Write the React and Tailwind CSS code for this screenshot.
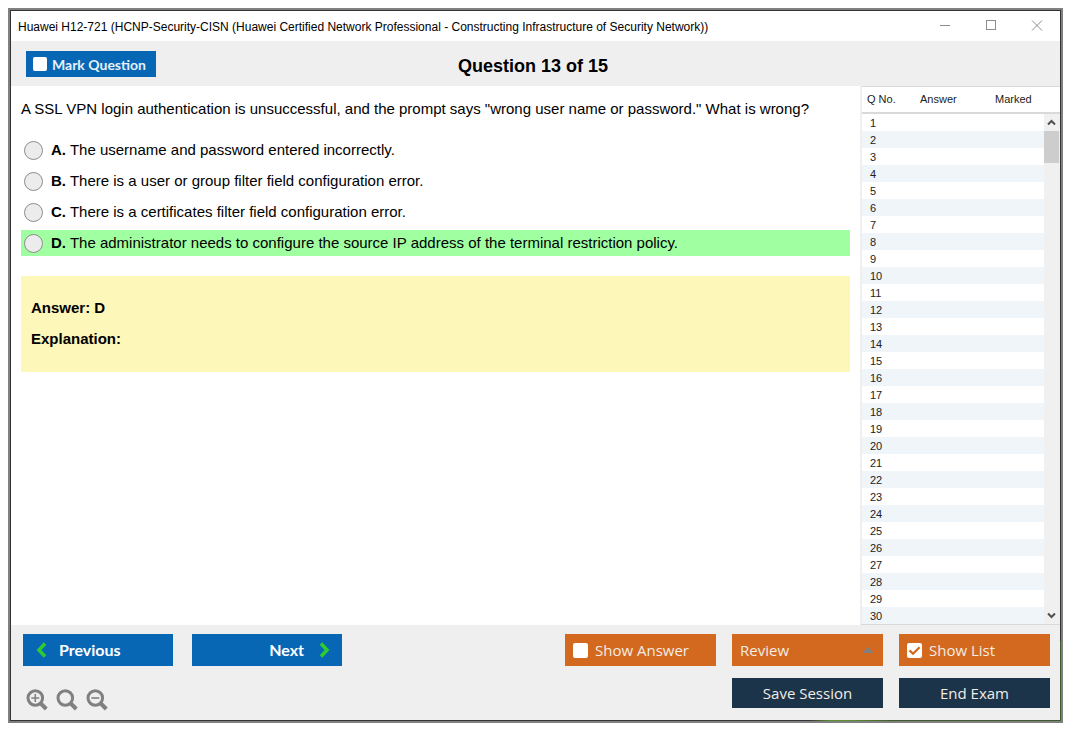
import { useState } from "react";

const OPTIONS = [
  { key: "A", text: "The username and password entered incorrectly." },
  { key: "B", text: "There is a user or group filter field configuration error." },
  { key: "C", text: "There is a certificates filter field configuration error." },
  {
    key: "D",
    text: "The administrator needs to configure the source IP address of the terminal restriction policy.",
    correct: true,
  },
];

const ROWS = Array.from({ length: 30 }, (_, i) => i + 1);

function TitleBar() {
  const control = "flex h-[30px] w-[46px] items-center justify-center text-[#8c8c8c]";
  return (
    <div className="flex items-center justify-between bg-white pl-[7px]">
      <span className="pt-[2px] text-[12px] leading-[28px] text-black">
        Huawei H12-721 (HCNP-Security-CISN (Huawei Certified Network Professional - Constructing
        Infrastructure of Security Network))
      </span>
      <div className="flex shrink-0">
        <button type="button" aria-label="Minimize" className={control}>
          <svg width="12" height="12" viewBox="0 0 12 12" stroke="currentColor">
            <path d="M1 5.5h10" />
          </svg>
        </button>
        <button type="button" aria-label="Maximize" className={control}>
          <svg width="12" height="12" viewBox="0 0 12 12" fill="none" stroke="currentColor">
            <rect x="1.5" y="0.5" width="9" height="9" />
          </svg>
        </button>
        <button type="button" aria-label="Close" className={control}>
          <svg width="12" height="12" viewBox="0 0 12 12" stroke="currentColor">
            <path d="M1 0.5l10 10M11 0.5L1 10.5" />
          </svg>
        </button>
      </div>
    </div>
  );
}

function CheckButton({ id, label, checked, onChange, className, boxClass }) {
  return (
    <label htmlFor={id} className={"flex cursor-pointer items-center " + className}>
      <span className={"grid shrink-0 " + boxClass}>
        <input
          id={id}
          type="checkbox"
          checked={checked}
          onChange={(e) => onChange(e.target.checked)}
          className="col-start-1 row-start-1 h-full w-full appearance-none rounded-[2px] bg-white"
        />
        {checked && (
          <svg
            viewBox="0 0 15 15"
            className="pointer-events-none col-start-1 row-start-1 h-full w-full"
            fill="none"
            stroke="#d2691e"
            strokeWidth="2.2"
          >
            <path d="M2.6 7.4l3.4 3.4 6.6-6.6" />
          </svg>
        )}
      </span>
      {label}
    </label>
  );
}

function QuestionList() {
  const head = "h-[28px] border-t border-b-2 border-[#d9d9d9] py-0 font-normal";
  return (
    <aside className="flex w-[200px] shrink-0 border-b border-l-2 border-b-[#d9d9d9] border-l-[#efefef] bg-white text-[11px] text-[#222]">
      <table className="flex-1 border-separate border-spacing-0 text-left">
        <thead>
          <tr>
            <th scope="col" className={"w-[53px] pl-[5px] " + head}>Q No.</th>
            <th scope="col" className={"w-[75px] pl-[5px] " + head}>Answer</th>
            <th scope="col" className={"pl-[5px] " + head}>Marked</th>
          </tr>
        </thead>
        <tbody>
          {ROWS.map((n) => (
            <tr key={n} className="h-[17px] even:bg-[#eff5f9]">
              <td className="pt-[2px] pr-0 pb-0 pl-2 leading-[15px]">{n}</td>
              <td className="p-0" />
              <td className="p-0" />
            </tr>
          ))}
        </tbody>
      </table>
      <div className="flex w-4 flex-col">
        <div className="h-[28px] border-t border-b-2 border-[#d9d9d9]" />
        <div className="flex flex-1 flex-col bg-[#f0f0f0]">
          <button type="button" aria-label="Scroll up" className="flex h-[17px] items-center justify-center pr-px">
            <svg width="9" height="7" viewBox="0 0 9 7" fill="none" stroke="#505050" strokeWidth="2">
              <path d="M1 5.5l3.5-3.5L8 5.5" />
            </svg>
          </button>
          <div className="mr-px h-[32px] bg-[#cdcdcd]" />
          <button type="button" aria-label="Scroll down" className="mt-auto flex h-[17px] items-center justify-center pr-px">
            <svg width="9" height="7" viewBox="0 0 9 7" fill="none" stroke="#505050" strokeWidth="2">
              <path d="M1 1.5L4.500 5 8 1.500" />
            </svg>
          </button>
        </div>
      </div>
    </aside>
  );
}

function ZoomIcon({ children }) {
  return (
    <svg width="22" height="22" viewBox="0 0 22 22" fill="none" stroke="#808080">
      <circle cx="9.300" cy="9" r="7.300" strokeWidth="3" />
      <path d="M14.300 14l6 6" strokeWidth="4" />
      {children}
    </svg>
  );
}

export default function App() {
  const [marked, setMarked] = useState(false);
  const [showAnswer, setShowAnswer] = useState(false);
  const [showList, setShowList] = useState(true);
  const [choice, setChoice] = useState(null);

  return (
    <div className="flex min-h-screen flex-col bg-white pt-2 pr-3 pb-3 pl-2 font-['Liberation_Sans',Arial,sans-serif] text-black">
      <div className="flex flex-1 flex-col border-2 border-[#808080]">
        <div className="flex flex-1 flex-col bg-[#333] bg-[linear-gradient(to_right,#333_76%,#5a8f2e_78%,#5a8f2e_80%,#3f5a2a_84%)] bg-[length:100%_80px] bg-bottom bg-no-repeat p-px">
          <TitleBar />

          <header className="grid grid-cols-[1fr_auto_1fr] items-start bg-[#efefef] pt-[10px] pr-5 pb-[5px] pl-[15px]">
            <CheckButton
              id="mark"
              label="Mark Question"
              checked={marked}
              onChange={setMarked}
              className="h-[26px] w-[130px] gap-[5px] bg-[#0867b5] pl-[7px] font-['Lato','Open_Sans',sans-serif] text-[14px] font-bold text-[#e6f0f8]"
              boxClass="h-[14px] w-[14px]"
            />
            <h1 className="text-[18px] leading-[30px] font-bold">Question 13 of 15</h1>
          </header>

          <div className="flex flex-1 bg-white">
            <main className="flex-1 px-[10px] pt-[10px] text-[15px] leading-[26px]">
              <p>
                A SSL VPN login authentication is unsuccessful, and the prompt says "wrong user name or
                password." What is wrong?
              </p>
              <div role="radiogroup" aria-label="Answers" className="mt-[15px] flex flex-col gap-[5px]">
                {OPTIONS.map((o) => (
                  <label
                    key={o.key}
                    className={"flex items-center gap-2 pl-[3px] " + (o.correct ? "bg-[#a0ffa0]" : "")}
                  >
                    <input
                      type="radio"
                      name="answer"
                      checked={choice === o.key}
                      onChange={() => setChoice(o.key)}
                      className="h-[19px] w-[19px] shrink-0 appearance-none rounded-full border border-[#8c8c8c] bg-[#ececec] checked:bg-[#808080]"
                    />
                    <span>
                      <b>{o.key}.</b> {o.text}
                    </span>
                  </label>
                ))}
              </div>
              <section className="mt-5 flex flex-col gap-[5px] bg-[#fdf7b9] px-[10px] pt-[19px] pb-5 font-bold">
                <p>Answer: D</p>
                <p>Explanation:</p>
              </section>
            </main>
            {showList && <QuestionList />}
          </div>

          <footer className="flex items-start justify-between bg-[#efefef] pt-[9px] pr-[10px] pb-[9px] pl-3 font-['Open_Sans','Noto_Sans',sans-serif] text-[15px] text-[#f3ece6]">
            <div className="flex flex-col">
              <div className="flex gap-[19px] font-['Lato','Open_Sans',sans-serif] text-[16px] font-bold text-white">
                <button type="button" className="flex h-[32px] w-[150px] items-center bg-[#0867b5] pl-[13px]">
                  <svg width="12" height="16" viewBox="0 0 12 16" fill="none" stroke="#2ecc2e" strokeWidth="3.500">
                    <path d="M9 1.500L3 8l6 6.500" />
                  </svg>
                  <span className="pl-[11px]">Previous</span>
                </button>
                <button
                  type="button"
                  className="flex h-[32px] w-[150px] items-center justify-end bg-[#0867b5] pr-[12px]"
                >
                  <span className="pr-[14px]">Next</span>
                  <svg width="12" height="16" viewBox="0 0 12 16" fill="none" stroke="#2ecc2e" strokeWidth="3.500">
                    <path d="M3 1.500L9 8l-6 6.500" />
                  </svg>
                </button>
              </div>
              <div className="flex gap-2 pt-[23px] pl-[3px]">
                <button type="button" aria-label="Zoom in">
                  <ZoomIcon>
                    <path d="M5.300 9h8M9.300 5v8" strokeWidth="1.600" />
                  </ZoomIcon>
                </button>
                <button type="button" aria-label="Reset zoom">
                  <ZoomIcon />
                </button>
                <button type="button" aria-label="Zoom out">
                  <ZoomIcon>
                    <path d="M5.300 9h8" strokeWidth="1.600" />
                  </ZoomIcon>
                </button>
              </div>
            </div>

            <div className="grid grid-cols-[repeat(3,151px)] gap-x-4 gap-y-3">
              <CheckButton
                id="show-answer"
                label="Show Answer"
                checked={showAnswer}
                onChange={setShowAnswer}
                className="h-[32px] gap-[7px] bg-[#d2691e] pl-2"
                boxClass="h-[15px] w-[15px]"
              />
              <button
                type="button"
                aria-haspopup="menu"
                className="flex h-[32px] items-center justify-between bg-[#d2691e] pr-[9px] pl-2"
              >
                Review
                <svg width="12" height="6" viewBox="0 0 12 6" fill="#808080">
                  <path d="M0.500 6L6 0l5.500 6z" />
                </svg>
              </button>
              <CheckButton
                id="show-list"
                label="Show List"
                checked={showList}
                onChange={setShowList}
                className="h-[32px] gap-[7px] bg-[#d2691e] pl-2"
                boxClass="h-[15px] w-[15px]"
              />
              <button type="button" className="col-start-2 h-[30px] bg-[#1b344a]">Save Session</button>
              <button type="button" className="h-[30px] bg-[#1b344a]">End Exam</button>
            </div>
          </footer>
        </div>
      </div>
    </div>
  );
}
